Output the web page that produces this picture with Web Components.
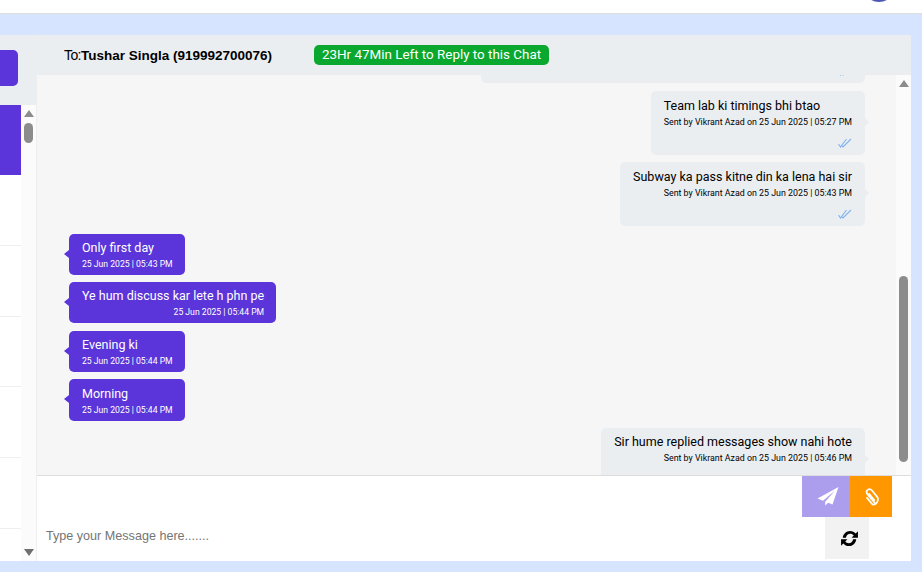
<!DOCTYPE html>
<html>
<head>
<meta charset="utf-8">
<title>Chat</title>
<style>
  html, body { margin: 0; height: 100%; overflow: hidden; }
  body { background: #d6e4ff; font-family: Roboto, sans-serif; }
</style>
</head>
<body>
<chat-page>
  <side-panel></side-panel>
  <chat-window>
    <chat-header slot="header" name="Tushar Singla (919992700076)" timer="23Hr 47Min Left to Reply to this Chat"></chat-header>
    <chat-bubble side="out" clipped ticks></chat-bubble>
    <chat-bubble side="out" nudge meta="Sent by Vikrant Azad on 25 Jun 2025 | 05:27 PM" ticks style="margin-top:8px">Team lab ki timings bhi btao</chat-bubble>
    <chat-bubble side="out" nudge meta="Sent by Vikrant Azad on 25 Jun 2025 | 05:43 PM" ticks style="margin-top:7px">Subway ka pass kitne din ka lena hai sir</chat-bubble>
    <chat-bubble side="in" meta="25 Jun 2025 | 05:43 PM" style="margin-top:8px">Only first day</chat-bubble>
    <chat-bubble side="in" meta="25 Jun 2025 | 05:44 PM" style="margin-top:7px">Ye hum discuss kar lete h phn pe</chat-bubble>
    <chat-bubble side="in" meta="25 Jun 2025 | 05:44 PM" style="margin-top:8px">Evening ki</chat-bubble>
    <chat-bubble side="in" nudge meta="25 Jun 2025 | 05:44 PM" style="margin-top:7px">Morning</chat-bubble>
    <chat-bubble side="out" meta="Sent by Vikrant Azad on 25 Jun 2025 | 05:46 PM" ticks style="margin-top:7px">Sir hume replied messages show nahi hote</chat-bubble>
    <chat-composer slot="composer"></chat-composer>
  </chat-window>
</chat-page>

<script>
class ChatPage extends HTMLElement {
  connectedCallback() {
    this.attachShadow({ mode: "open" });
    this.shadowRoot.innerHTML = `
    <style>
      :host { display: flex; flex-direction: column; height: 572px; }
      .top { height: 13px; background: #fff; border-bottom: 1px solid #dedede; display: flex; justify-content: flex-end; overflow: hidden; padding-right: 27px; }
      .avatar { width: 32px; height: 32px; border-radius: 50%; background: #4d57b4; margin-top: -30px; flex: none; }
      .work { flex: 1; min-height: 0; display: flex; padding: 21px 11px 11px 0; }
    </style>
    <div class="top"><div class="avatar"></div></div>
    <div class="work"><slot></slot></div>`;
  }
}

class ScrollRail extends HTMLElement {
  connectedCallback() {
    this.attachShadow({ mode: "open" });
    const top = this.getAttribute("thumb-top");
    const height = this.getAttribute("thumb-height");
    this.shadowRoot.innerHTML = `
    <style>
      :host { display: flex; flex-direction: column; align-items: center; background: #fbfbfb; position: relative; }
      .up, .down { width: 0; height: 0; border-left: 5px solid transparent; border-right: 5px solid transparent; position: absolute; left: 50%; margin-left: -5px; }
      .up { top: 5px; border-bottom: 7px solid #8c8c8c; }
      .down { bottom: 5px; border-top: 7px solid #6f6f6f; }
      .thumb { position: absolute; top: ${top}px; height: ${height}px; width: 9px; background: #8c8c8c; border-radius: 5px; }
    </style>
    <div class="up"></div>
    <div class="thumb"></div>
    ${this.hasAttribute("no-down") ? "" : '<div class="down"></div>'}`;
  }
}

class SidePanel extends HTMLElement {
  connectedCallback() {
    this.attachShadow({ mode: "open" });
    this.shadowRoot.innerHTML = `
    <style>
      :host { display: flex; flex-direction: column; width: 36px; flex: none; background: #ebeef1; border-right: 1px solid #eeeeee; }
      .head { height: 70px; flex: none; padding-top: 15px; box-sizing: border-box; }
      .new { width: 18px; height: 36px; background: #5b35d9; border-radius: 0 5px 5px 0; }
      .body { flex: 1; min-height: 0; display: flex; }
      .list { width: 21px; flex: none; background: #fff; }
      .row { height: 70.8px; box-sizing: border-box; border-bottom: 1px solid #eeeeee; }
      .row.active { height: 70px; background: #5b35d9; border: 0; }
      scroll-rail { flex: 1; }
    </style>
    <div class="head"><div class="new"></div></div>
    <div class="body">
      <div class="list">
        <div class="row active"></div>
        <div class="row"></div><div class="row"></div><div class="row"></div><div class="row"></div><div class="row"></div>
      </div>
      <scroll-rail thumb-top="18" thumb-height="20"></scroll-rail>
    </div>`;
  }
}

class ChatWindow extends HTMLElement {
  connectedCallback() {
    this.attachShadow({ mode: "open" });
    this.shadowRoot.innerHTML = `
    <style>
      :host { display: flex; flex-direction: column; flex: 1; min-width: 0; }
      .middle { height: 400px; flex: none; display: flex; background: #f6f6f6; }
      .messages { flex: 1; min-width: 0; overflow: hidden; display: flex; flex-direction: column; padding: 0 31px 0 32px; }
      scroll-rail { width: 15px; flex: none; }
    </style>
    <slot name="header"></slot>
    <div class="middle">
      <div class="messages"><slot></slot></div>
      <scroll-rail thumb-top="201" thumb-height="186" no-down></scroll-rail>
    </div>
    <slot name="composer"></slot>`;
  }
}

class ChatHeader extends HTMLElement {
  connectedCallback() {
    this.attachShadow({ mode: "open" });
    this.shadowRoot.innerHTML = `
    <style>
      :host { display: flex; align-items: center; height: 40px; flex: none; background: #ebeef1; padding-left: 27px; color: #000; font: 13.5px "Liberation Sans", Arial, sans-serif; }
      .to { font-size: 14px; letter-spacing: -0.6px; }
      b { font-weight: 700; }
      .timer { margin-left: 42px; margin-top: -1px; height: 20px; padding: 0 8px; border-radius: 5px; background: #0aa82f; color: #fff; font: 13.4px/20px Roboto, sans-serif; white-space: nowrap; }
    </style>
    <span><span class="to">To:</span><b id="name"></b></span>
    <span class="timer" id="timer"></span>`;
    this.shadowRoot.getElementById("name").textContent = this.getAttribute("name");
    this.shadowRoot.getElementById("timer").textContent = this.getAttribute("timer");
  }
}

class ChatBubble extends HTMLElement {
  connectedCallback() {
    this.attachShadow({ mode: "open" });
    const meta = this.getAttribute("meta") || "";
    const ticks = this.hasAttribute("ticks");
    this.shadowRoot.innerHTML = `
    <style>
      :host { display: block; position: relative; flex: none; box-sizing: border-box; width: fit-content; border-radius: 5px; padding: 5px 13px; font-size: 12.5px; line-height: 18px; }
      :host([side="out"]) { align-self: flex-end; background: #ebeef1; color: #000; padding-bottom: 7px; }
      :host([side="in"]) { align-self: flex-start; background: #5b35d9; color: #fff; padding-right: 12px; }
      :host([nudge]) { padding-top: 6px; }
      :host([clipped]) { width: 384px; height: 8px; padding: 0; border-radius: 0 0 5px 5px; }
      .tail { position: absolute; top: 50%; width: 0; height: 0; border-top: 4px solid transparent; border-bottom: 4px solid transparent; margin-top: -5px; }
      :host([side="out"]) .tail { right: -4px; border-left: 4px solid #ebeef1; }
      :host([side="in"]) .tail { left: -5px; border-right: 5px solid #5b35d9; }
      :host([clipped]) .tail { display: none; }
      .meta { font-size: 8.85px; line-height: 12px; text-align: right; margin-top: 1px; white-space: nowrap; }
      :host([side="in"]) .meta { font-size: 8.65px; }
      .text { white-space: nowrap; }
      .ticks { display: block; margin: 11px 0 0 auto; }
      :host([nudge]) .ticks { margin-top: 10px; }
      :host([clipped]) .ticks { position: absolute; right: 13px; bottom: 7px; margin: 0; }
    </style>
    <span class="tail"></span>
    <div class="text"><slot></slot></div>
    ${meta ? `<div class="meta">${meta}</div>` : ""}
    ${ticks ? `<svg class="ticks" width="14" height="10" viewBox="0 0 14 10" fill="none" stroke="#7fb2ee" stroke-width="1.1"><path d="M0.5 6 L2.5 9 L8.5 1"/><path d="M4 8 L5 9 L13 1"/></svg>` : ""}`;
  }
}

class ChatComposer extends HTMLElement {
  connectedCallback() {
    this.attachShadow({ mode: "open" });
    this.shadowRoot.innerHTML = `
    <style>
      :host { display: flex; flex: none; height: 86px; box-sizing: border-box; background: #fff; border-top: 1px solid #dddddd; padding: 0 19px 0 9px; }
      .input { flex: 1; min-width: 0; display: flex; align-items: flex-end; font: 12.6px/20px "Liberation Sans", Arial, sans-serif; color: #757575; padding-bottom: 15px; }
      .actions { display: flex; flex-direction: column; align-items: center; }
      .row { display: flex; }
      .btn { display: flex; align-items: center; justify-content: center; }
      .send { width: 48px; height: 41px; background: #ad9ded; padding-left: 4px; box-sizing: border-box; }
      .attach { width: 42px; height: 41px; background: #ff9800; }
      .refresh { width: 44px; height: 42px; background: #f2f2f2; padding-left: 4px; box-sizing: border-box; }
    </style>
    <div class="input">Type your Message here.......</div>
    <div class="actions">
      <div class="row">
        <div class="btn send">
          <svg width="22" height="19" viewBox="0 0 22 19"><path fill="#fff" d="M21.5 0 L0.5 11.5 L6 13.8 L18 3.5 L8.2 14.8 L8.2 18.5 L11.2 15.8 L15.5 17.5 Z"/></svg>
        </div>
        <div class="btn attach">
          <svg width="15" height="18" viewBox="0 0 15 18" fill="none" stroke="#fff" stroke-width="1.7" stroke-linecap="round"><path d="M10.8 15 L3.6 6.4 C2.3 4.8 2.3 3 3.6 1.9 C4.9 .8 6.7 1 8 2.5 L13 8.6 C14.3 10.2 14.2 12.8 12.6 14.9 C11.3 16.7 9.2 17.1 7.8 15.6 L3 9.9 M5.1 5.8 L10.4 12.2"/></svg>
        </div>
      </div>
      <div class="btn refresh">
        <svg width="19" height="17" viewBox="0 0 18 16" fill="#000"><path d="M2.6 7.4 C3 3.4 6 .8 9.6 .8 C11.7 .8 13.6 1.8 14.9 3.3 L17 1.2 L17 7.2 L11 7.2 L13 5.1 C12.2 4.1 11 3.6 9.6 3.6 C7.7 3.6 6 5 5.6 7.4 Z"/><path d="M15.4 8.6 C15 12.6 12 15.2 8.4 15.2 C6.3 15.2 4.4 14.2 3.1 12.7 L1 14.8 L1 8.8 L7 8.8 L5 10.9 C5.8 11.9 7 12.4 8.4 12.4 C10.3 12.4 12 11 12.4 8.6 Z"/></svg>
      </div>
    </div>`;
  }
}

customElements.define("scroll-rail", ScrollRail);
customElements.define("chat-page", ChatPage);
customElements.define("side-panel", SidePanel);
customElements.define("chat-window", ChatWindow);
customElements.define("chat-header", ChatHeader);
customElements.define("chat-bubble", ChatBubble);
customElements.define("chat-composer", ChatComposer);
</script>
</body>
</html>
